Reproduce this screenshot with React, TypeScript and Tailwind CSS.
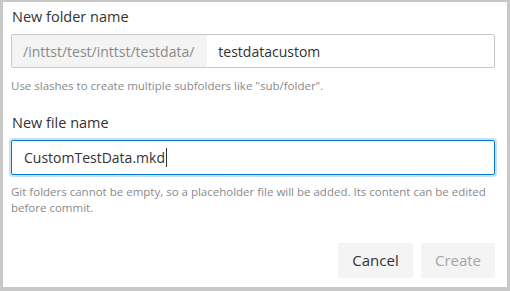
import React from "react";

export default function App() {
  return (
    <div
      className="w-[510px] h-[291px] bg-[#c8c8c8] pt-[2px] pl-[3px] pr-[3px] pb-[4px]"
      style={{ fontFamily: '"Open Sans", "Noto Sans", sans-serif' }}
    >
      <div className="w-full h-full bg-white flex flex-col pl-[8px] pr-[12px] pt-[5px] pb-[9px]">
        <div className="text-[14.5px] leading-[20px] text-[#333333] pl-[1px]">New folder name</div>
        <div className="mt-[7px] h-[34px] flex border border-[#c8c8c8] rounded-[2px] overflow-hidden">
          <div className="bg-[#f4f4f4] flex items-center pl-[11px] pr-[13px] text-[14px] text-[#8a8a8a]">
            /inttst/test/inttst/testdata/
          </div>
          <div className="flex items-center pl-[11px] text-[14px] text-[#333333]">testdatacustom</div>
        </div>
        <div className="mt-[10px] text-[11.5px] leading-[16px] text-[#8a8a8a]">
          Use slashes to create multiple subfolders like "sub/folder".
        </div>
        <div className="mt-[19px] text-[14.5px] leading-[20px] text-[#333333] pl-[1px]">New file name</div>
        <div className="mt-[7px] h-[35px] flex items-center border border-[#0078d4] rounded-[2px] shadow-[0_0_0_2px_#c7e0f4] pl-[12px] text-[14px] text-[#333333]">
          CustomTestData.mkd
          <span className="inline-block w-[1px] h-[19px] bg-[#333333] ml-[1px]"></span>
        </div>
        <div className="mt-[9px] text-[11.5px] leading-[16px] text-[#8a8a8a]">
          Git folders cannot be empty, so a placeholder file will be added. Its content can be edited before commit.
        </div>
        <div className="mt-auto flex justify-end gap-[8px]">
          <button className="w-[75px] h-[35px] bg-[#f4f4f4] rounded-[2px] text-[15px] text-[#333333]">Cancel</button>
          <button className="w-[74px] h-[35px] bg-[#f4f4f4] rounded-[2px] text-[15px] text-[#a6a6a6]">Create</button>
        </div>
      </div>
    </div>
  );
}
